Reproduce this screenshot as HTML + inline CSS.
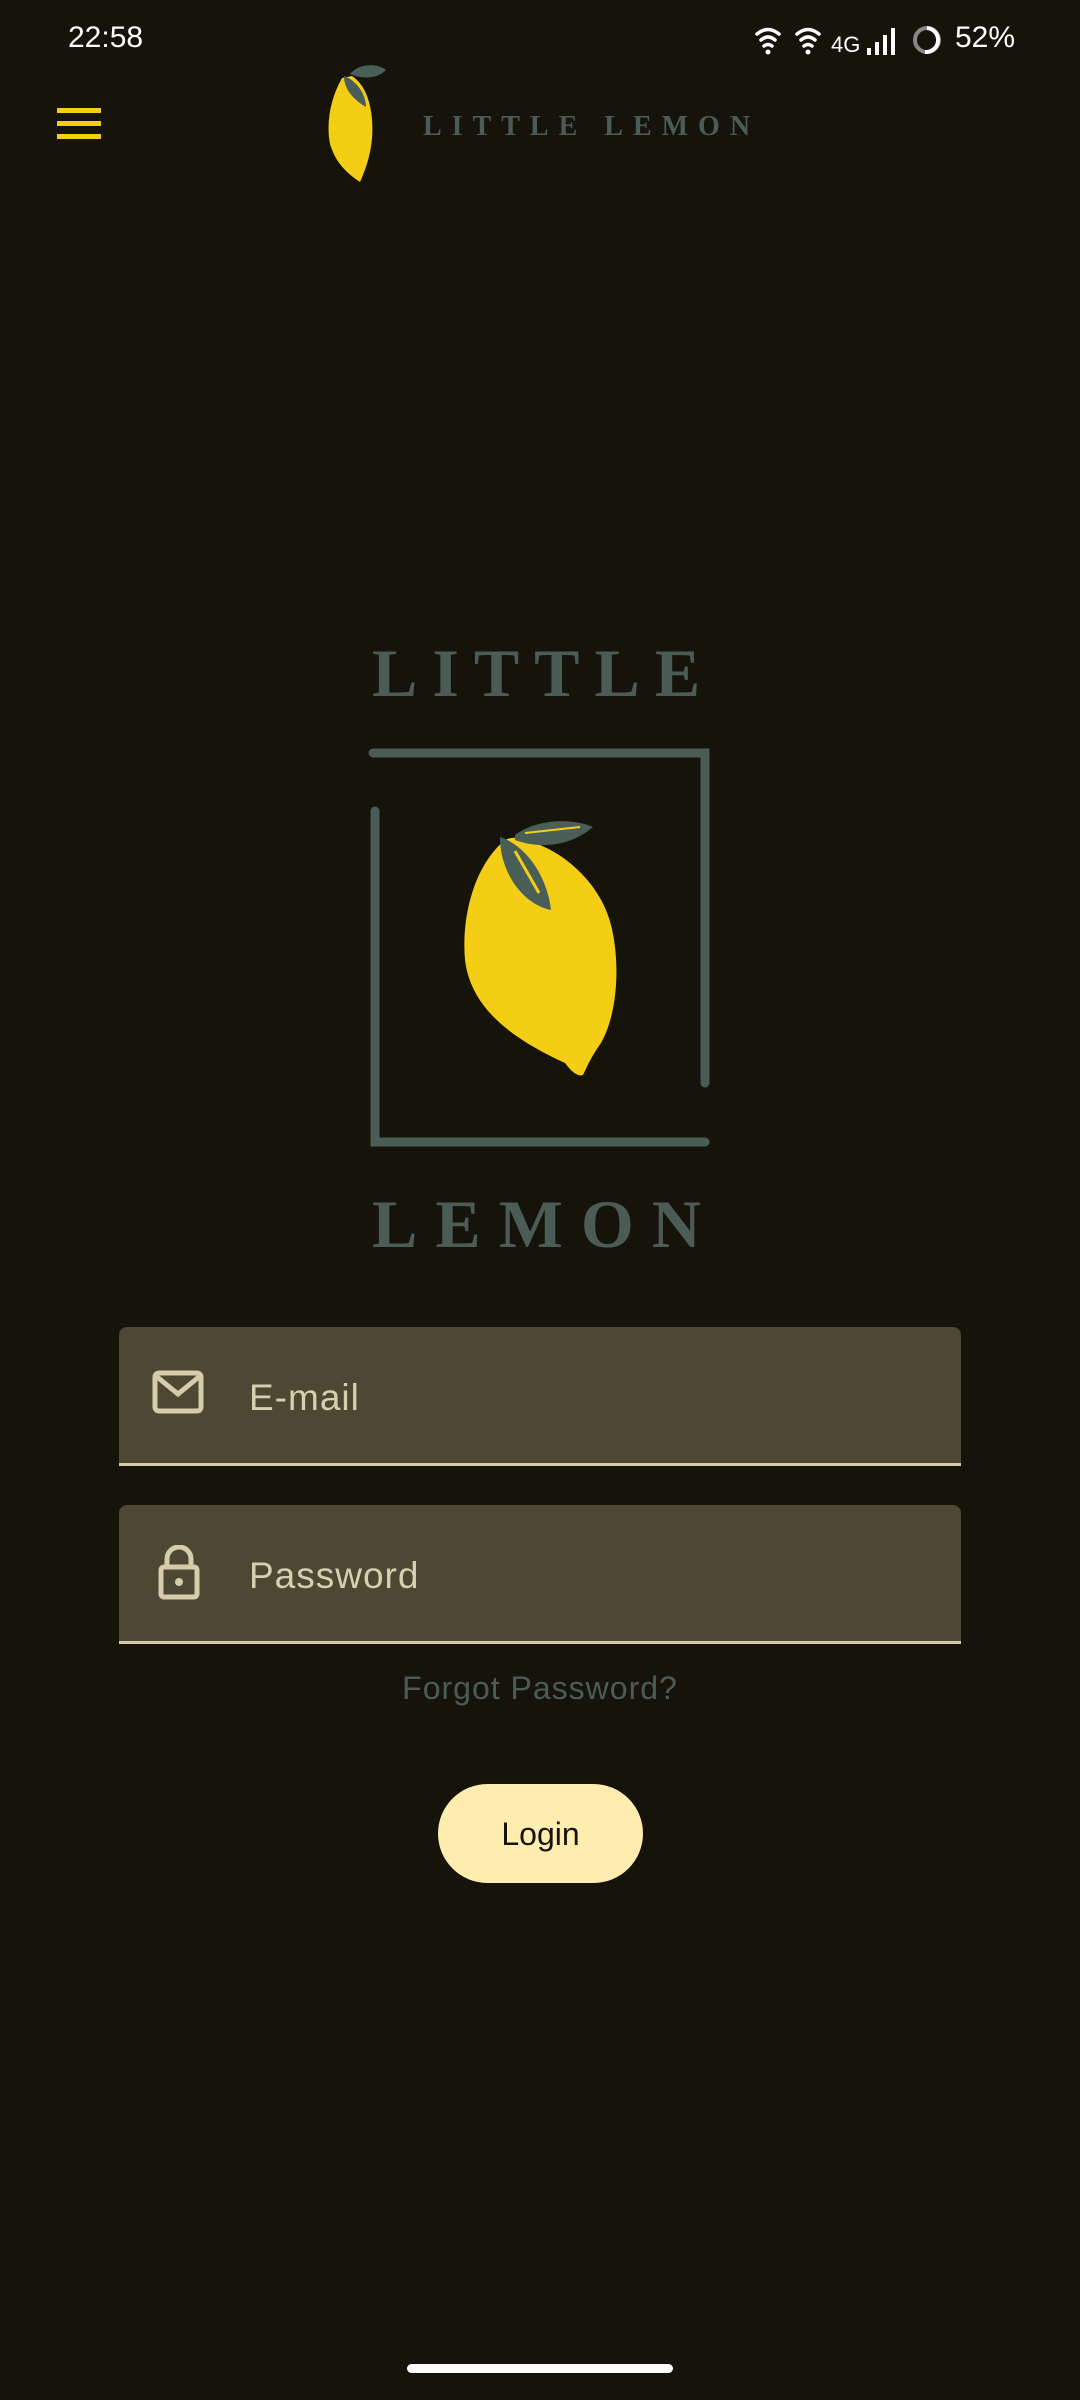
<!DOCTYPE html>
<html><head><meta charset="utf-8"><style>
html,body{margin:0;padding:0;}
body{width:1080px;height:2400px;background:#15130a;position:relative;overflow:hidden;font-family:"Liberation Sans",sans-serif;}
.a{position:absolute;}
.st{color:#fff;font-size:30px;top:21px;}
.field{position:absolute;left:119px;width:842px;height:136px;background:#4d4733;border-radius:8px 8px 0 0;border-bottom:3px solid #d6ccaa;}
.field span{position:absolute;left:130px;top:50px;font-size:37px;color:#d8cfb0;letter-spacing:1px;}
.ser{font-family:"Liberation Serif",serif;font-weight:bold;color:#4b5c56;white-space:nowrap;}
</style></head><body>
<div class="a st" style="left:68px;">22:58</div>
<svg class="a" style="left:750px;top:24px" width="280" height="34" viewBox="0 0 280 34">
 <g fill="none" stroke="#fff" stroke-width="3.5" stroke-linecap="round">
  <path d="M7 10 Q18 1 29 10"/><path d="M11 16 Q18 10 25 16"/><path d="M14 22 Q18 19 22 22"/>
  <path d="M47 10 Q58 1 69 10"/><path d="M51 16 Q58 10 65 16"/><path d="M54 22 Q58 19 62 22"/>
 </g>
 <circle cx="18" cy="28" r="2.5" fill="#fff"/><circle cx="58" cy="28" r="2.5" fill="#fff"/>
 <text x="81" y="28" fill="#fff" font-size="22" font-family="Liberation Sans">4G</text>
 <rect x="117" y="24" width="4" height="7" fill="#fff"/><rect x="125" y="18" width="4" height="13" fill="#fff"/><rect x="133" y="11" width="4" height="20" fill="#fff"/><rect x="141" y="4" width="4" height="27" fill="#fff"/>
 <circle cx="177" cy="16" r="12" fill="none" stroke="#888" stroke-width="4"/>
 <path d="M177 4 A12 12 0 1 1 175 28" fill="none" stroke="#fff" stroke-width="4"/>
</svg>
<div class="a st" style="left:955px;">52%</div>
<div class="a" style="left:57px;top:108px;width:44px;height:5px;background:#f4ce14"></div>
<div class="a" style="left:57px;top:121px;width:44px;height:5px;background:#f4ce14"></div>
<div class="a" style="left:57px;top:134px;width:44px;height:5px;background:#f4ce14"></div>
<svg class="a" style="left:326px;top:64px" width="72" height="118" viewBox="0 0 72 118">
 <path d="M16 14 C4 35 0 60 4 80 C10 100 22 110 34 118 C42 100 48 80 46 55 C44 35 38 20 26 12Z" fill="#f4ce14"/>
 <path d="M24 10 C32 0 50 -2 60 6 C52 14 38 16 24 10Z" fill="#495e57"/>
 <path d="M18 12 C30 16 40 30 40 43 C28 36 18 26 18 12Z" fill="#495e57"/>
</svg>
<div class="a ser" style="left:423px;top:111px;font-size:28px;letter-spacing:10px;">LITTLE LEMON</div>
<div class="a ser" style="left:372px;top:634px;font-size:68px;letter-spacing:15px;">LITTLE</div>
<svg class="a" style="left:365px;top:745px" width="350" height="405" viewBox="0 0 350 405">
 <g fill="none" stroke="#4b5c56" stroke-width="9" stroke-linecap="round">
  <path d="M8 8 H340 V338"/><path d="M10 66 V397 H340"/>
 </g>
 <path d="M140 95 C110 120 96 170 100 215 C106 265 150 295 200 318 C206 326 212 332 218 330 C222 322 226 312 236 298 C252 270 256 220 246 180 C236 140 200 105 160 95 C152 92 146 92 140 95Z" fill="#f4ce14"/>
 <path d="M150 90 C170 75 205 72 228 82 C210 98 180 106 150 95Z" fill="#495e57"/>
 <path d="M135 92 C160 100 182 130 186 165 C160 160 135 130 135 92Z" fill="#495e57"/>
 <path d="M150 106 L174 148" stroke="#f4ce14" stroke-width="3"/>
 <path d="M160 88 L215 82" stroke="#f4ce14" stroke-width="2"/>
</svg>
<div class="a ser" style="left:372px;top:1185px;font-size:68px;letter-spacing:18px;">LEMON</div>
<div class="field" style="top:1327px;"><svg class="a" style="left:33px;top:43px" width="52" height="44" viewBox="0 0 52 44"><rect x="3" y="3" width="46" height="38" rx="4" fill="none" stroke="#d6ccaa" stroke-width="5"/><path d="M4 6 L26 24 L48 6" fill="none" stroke="#d6ccaa" stroke-width="5"/></svg><span>E-mail</span></div>
<div class="field" style="top:1505px;"><svg class="a" style="left:38px;top:40px" width="44" height="56" viewBox="0 0 44 56"><path d="M10 22 V14 A12 12 0 0 1 34 14 V22" fill="none" stroke="#d6ccaa" stroke-width="5"/><rect x="4" y="22" width="36" height="30" rx="3" fill="none" stroke="#d6ccaa" stroke-width="5"/><circle cx="22" cy="37" r="4" fill="#d6ccaa"/></svg><span>Password</span></div>
<div class="a" style="left:0;width:1080px;top:1670px;text-align:center;font-size:32px;color:#4b5c56;letter-spacing:1px;">Forgot Password?</div>
<div class="a" style="left:438px;top:1784px;width:205px;height:99px;border-radius:50px;background:#ffedaf;color:#15130a;font-size:32px;text-align:center;line-height:101px;">Login</div>
<div class="a" style="left:407px;top:2364px;width:266px;height:9px;border-radius:5px;background:#fff;"></div>
</body></html>
